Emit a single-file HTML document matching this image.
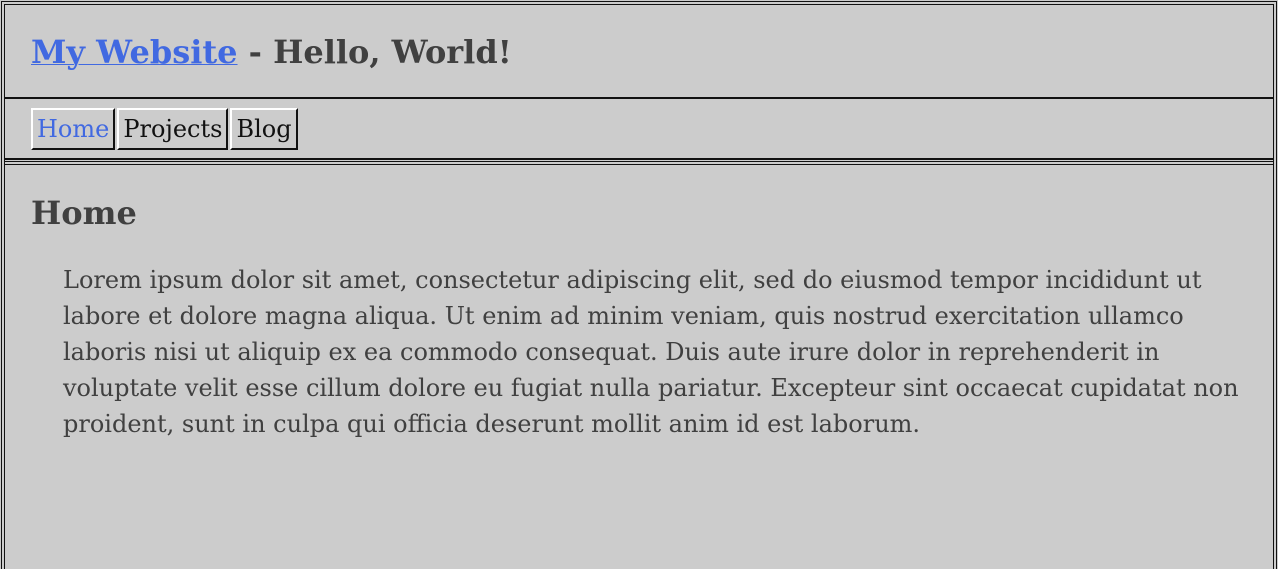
<!DOCTYPE html>
<html><head><style>
html,body{margin:0;padding:0;background:#ccc;width:1278px;height:569px;overflow:hidden}
body{font-family:"DejaVu Serif","Liberation Serif",serif;color:#404040;position:relative}
.box{position:absolute;left:1px;top:1px;width:1268px;height:564px;border:4px double #111;border-bottom:none;overflow:hidden}
header{height:92px;border-bottom:2px solid #111;position:relative}
header h1{position:absolute;left:26px;top:29px;margin:0;font-size:32px;line-height:36px;font-weight:bold;color:#404040;white-space:nowrap}
header h1 a{color:#4169e1;text-decoration:underline;text-decoration-thickness:1px}
nav{height:59px;border-bottom:2px solid #111;position:relative}
nav .btns{position:absolute;left:26px;top:9px;display:flex;gap:2px}
nav span{display:block;height:38px;line-height:38px;padding:0 4px;font-size:24px;color:#111;border:2px solid;border-color:#fff #111 #111 #fff}
nav span.on{color:#4169e1}
main{border-top:4px double #111;margin-top:1px;position:relative}
main h2{position:absolute;left:26px;top:30px;margin:0;font-size:32px;line-height:36px;font-weight:bold}
main p{position:absolute;left:58px;top:97px;width:1190px;margin:0;font-size:24px;line-height:36px}
</style></head><body>
<div class="box">
<header><h1><a>My Website</a> - Hello, World!</h1></header>
<nav><div class="btns"><span class="on">Home</span><span>Projects</span><span>Blog</span></div></nav>
<main><h2>Home</h2>
<p>Lorem ipsum dolor sit amet, consectetur adipiscing elit, sed do eiusmod tempor incididunt ut labore et dolore magna aliqua. Ut enim ad minim veniam, quis nostrud exercitation ullamco laboris nisi ut aliquip ex ea commodo consequat. Duis aute irure dolor in reprehenderit in voluptate velit esse cillum dolore eu fugiat nulla pariatur. Excepteur sint occaecat cupidatat non proident, sunt in culpa qui officia deserunt mollit anim id est laborum.</p>
</main>
</div>
</body></html>
